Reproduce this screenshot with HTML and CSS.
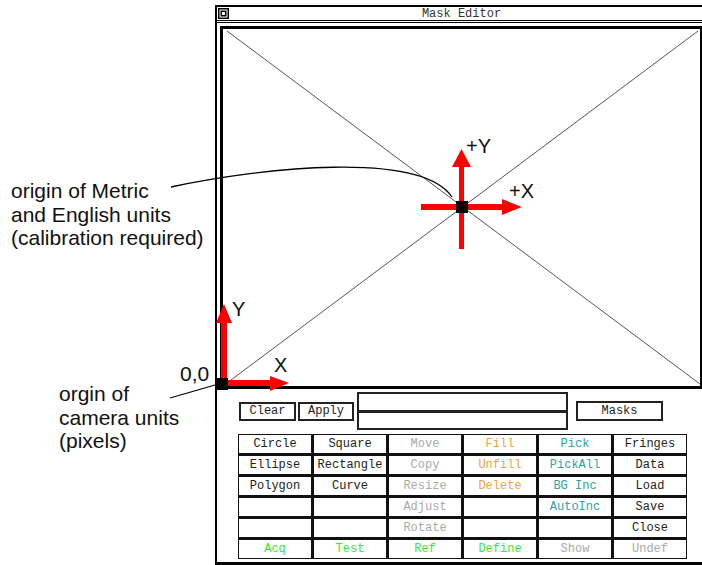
FILE: index.html
```html
<!DOCTYPE html>
<html>
<head>
<meta charset="utf-8">
<link rel="stylesheet" href="styles.css">
</head>
<body>
<div class="window">
  <div class="titlebar">
    <span class="title-icon"><svg width="11" height="11" viewBox="0 0 11 11"><rect width="11" height="11" fill="#000"/><rect x="2" y="2" width="7" height="7" fill="none" stroke="#fff" stroke-width="1"/><rect x="4" y="4" width="3" height="3" fill="#fff"/></svg></span>
    <span class="title">Mask Editor</span>
  </div>
  <div class="canvas">
    <svg class="diag" width="477" height="357" viewBox="0 0 477 357"><line x1="4" y1="2" x2="477" y2="355" stroke="#555" stroke-width="1"/><line x1="475" y1="2" x2="0" y2="357" stroke="#555" stroke-width="1"/></svg>
  </div>
  <div class="panel">
    <div class="toprow">
      <div class="btn btn-clear">Clear</div>
      <div class="btn btn-apply">Apply</div>
      <div class="field"><div class="field-half"></div><div class="field-half field-bottom"></div></div>
      <div class="btn btn-masks">Masks</div>
    </div>
    <div class="grid">
      <div class="cell">Circle</div><div class="cell">Square</div><div class="cell gray">Move</div><div class="cell orange">Fill</div><div class="cell teal">Pick</div><div class="cell">Fringes</div>
      <div class="cell">Ellipse</div><div class="cell">Rectangle</div><div class="cell gray">Copy</div><div class="cell orange">Unfill</div><div class="cell teal">PickAll</div><div class="cell">Data</div>
      <div class="cell">Polygon</div><div class="cell">Curve</div><div class="cell gray">Resize</div><div class="cell orange">Delete</div><div class="cell teal">BG Inc</div><div class="cell">Load</div>
      <div class="cell"></div><div class="cell"></div><div class="cell gray">Adjust</div><div class="cell"></div><div class="cell teal">AutoInc</div><div class="cell">Save</div>
      <div class="cell"></div><div class="cell"></div><div class="cell gray">Rotate</div><div class="cell"></div><div class="cell"></div><div class="cell">Close</div>
      <div class="cell green">Acq</div><div class="cell green">Test</div><div class="cell green">Ref</div><div class="cell green">Define</div><div class="cell gray">Show</div><div class="cell gray">Undef</div>
    </div>
  </div>
</div>

<svg class="overlay" width="702" height="565" viewBox="0 0 702 565">
  <path d="M171,187 C260,168 420,150 452,197" fill="none" stroke="#000" stroke-width="1.3"/>
  <line x1="170" y1="398" x2="215" y2="385" stroke="#000" stroke-width="1.3"/>
  <rect x="221" y="320" width="6" height="62" fill="#f00"/>
  <polygon points="216,323 232,323 224,304" fill="#f00"/>
  <rect x="226" y="380" width="46" height="6" fill="#f00"/>
  <polygon points="270,376 270,391 289,383" fill="#f00"/>
  <rect x="216" y="378" width="12" height="12" fill="#000"/>
  <rect x="459" y="164" width="5" height="85" fill="#f00"/>
  <polygon points="452,167 471,167 461.5,149" fill="#f00"/>
  <rect x="421" y="204" width="83" height="6" fill="#f00"/>
  <polygon points="502,199 502,215 522,207" fill="#f00"/>
  <rect x="456" y="201" width="12" height="12" fill="#000"/>
</svg>

<div class="note note-metric">origin of Metric<br>and English units<br>(calibration required)</div>
<div class="note note-camera">orgin of<br>camera units<br>(pixels)</div>
<div class="note note-zero">0,0</div>
<div class="axis axis-y">Y</div>
<div class="axis axis-x">X</div>
<div class="axis axis-py">+Y</div>
<div class="axis axis-px">+X</div>
</body>
</html>
```

FILE: styles.css
```css
html, body {
  margin: 0;
  padding: 0;
}
body {
  width: 702px;
  height: 565px;
  overflow: hidden;
  position: relative;
  background: #fff;
  font-family: "Liberation Sans", Arial, sans-serif;
}
.window {
  position: absolute;
  left: 215px;
  top: 5px;
  width: 493px;
  height: 560px;
  box-sizing: border-box;
  border: 2px solid #000;
  border-bottom-width: 3px;
  background: #fff;
  display: flex;
  flex-direction: column;
}
.titlebar {
  position: relative;
  height: 12px;
  padding-top: 1px;
  border-bottom: 3px double #000;
  display: flex;
  align-items: center;
  justify-content: center;
  font-family: "Liberation Mono", "Courier New", monospace;
  font-size: 12px;
  color: #333;
}
.title-icon {
  position: absolute;
  left: 1px;
  top: 1px;
  width: 11px;
  height: 11px;
  display: flex;
}
.title { line-height: 12px; }
.canvas {
  margin: 3px 3px 0 3px;
  width: 477px;
  height: 357px;
  border: 3px solid #000;
  background: #fff;
  display: flex;
}
.diag { display: block; }
.panel {
  flex: 1;
  padding-top: 3px;
  display: flex;
  flex-direction: column;
}
.toprow {
  display: flex;
  align-items: center;
  padding-left: 22px;
  height: 38px;
}
.btn {
  box-sizing: border-box;
  border: 2px solid #222;
  display: flex;
  align-items: center;
  justify-content: center;
  font-family: "Liberation Mono", "Courier New", monospace;
  font-size: 12px;
  color: #222;
}
.btn-clear { width: 57px; height: 19px; }
.btn-apply { width: 56px; height: 19px; margin-left: 2px; }
.btn-masks { width: 87px; height: 20px; margin-left: 8px; }
.field {
  box-sizing: border-box;
  width: 211px;
  height: 38px;
  margin-left: 3px;
  border: 2px solid #222;
  display: flex;
  flex-direction: column;
}
.field-half { flex: 1; }
.field-bottom { border-top: 3px solid #222; }
.grid {
  margin-top: 4px;
  margin-left: 21px;
  align-self: flex-start;
  display: grid;
  grid-template-columns: repeat(6, 72px);
  grid-template-rows: repeat(6, 18px);
  gap: 3px;
  padding: 1px;
  background: #111;
}
.cell {
  background: #fff;
  font-family: "Liberation Mono", "Courier New", monospace;
  font-size: 12px;
  line-height: 19px;
  text-align: center;
  color: #222;
  white-space: nowrap;
  overflow: hidden;
}
.gray { color: #a9a9a9; }
.orange { color: #f7a040; }
.teal { color: #2fa2a2; }
.green { color: #39e639; }
.overlay {
  position: absolute;
  left: 0;
  top: 0;
  pointer-events: none;
}
.note {
  position: absolute;
  font-size: 21px;
  line-height: 23.5px;
  color: #111;
  white-space: nowrap;
}
.note-metric { left: 11px; top: 179px; }
.note-camera { left: 59px; top: 382px; }
.note-zero { left: 180px; top: 362px; }
.axis {
  position: absolute;
  font-size: 20px;
  line-height: 23px;
  color: #111;
}
.axis-y { left: 232px; top: 298px; }
.axis-x { left: 274px; top: 354px; }
.axis-py { left: 466px; top: 135px; }
.axis-px { left: 509px; top: 180px; }
```
